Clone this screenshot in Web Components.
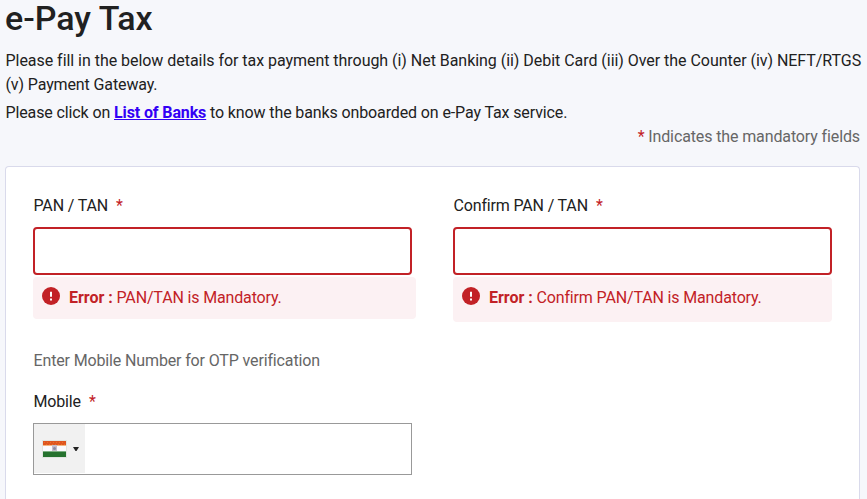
<!DOCTYPE html>
<html lang="en">
<head>
<meta charset="utf-8">
<title>e-Pay Tax</title>
<style>
body {
	margin: 0;
	height: 499px;
	overflow: hidden;
	background: #f6f7fb;
	color: #212121;
	font-family: Roboto, "Liberation Sans", sans-serif;
	font-size: 16px;
	line-height: 24px;
	letter-spacing: -0.12px;
}
</style>
</head>
<body>
<epay-page></epay-page>

<script>
// red star next to a mandatory label
class MandatoryMark extends HTMLElement {
	constructor() {
		super();
		this.attachShadow({ mode: "open" }).innerHTML = //html
		`
		<style>
			:host { color: #c22126; }
		</style>*`;
	}
}
customElements.define("mandatory-mark", MandatoryMark);

const ErrorTemplate = document.createElement("template");
ErrorTemplate.innerHTML = //html
`
	<style>
		:host {
			display: flex;
			box-sizing: border-box;
			gap: 9px;
			margin-top: 2px;
			padding: 9px 9px 0;
			border-radius: 4px;
			background: #fcf1f3;
			color: #c22126;
			line-height: 24px;
			letter-spacing: -0.15px;
		}
		svg { flex: none; display: block; margin-top: 1px; }
		b { font-weight: 700; letter-spacing: -0.03px; }
	</style>
	<svg width="18" height="18" viewBox="0 0 18 18">
		<circle cx="9" cy="9" r="9" fill="#c22126"/>
		<path d="M8 4.8h2v5H8zM8 11.4h2v2H8z" fill="#fff"/>
	</svg>
	<div><b>Error :</b> <slot></slot></div>
`;
class FieldError extends HTMLElement {
	constructor() {
		super();
		this.attachShadow({ mode: "open" });
		this.shadowRoot.appendChild(ErrorTemplate.content.cloneNode(true));
	}
}
customElements.define("field-error", FieldError);

const FieldTemplate = document.createElement("template");
FieldTemplate.innerHTML = //html
`
	<style>
		:host { display: block; }
		label {
			display: flex;
			gap: 8px;
			height: 24px;
			margin-bottom: 9px;
			padding-left: 0.5px;
			letter-spacing: -0.16px;
		}
		input {
			display: block;
			box-sizing: border-box;
			width: 100%;
			height: 48px;
			padding: 0 12px;
			border: 2px solid #c22126;
			border-radius: 4px;
			background: #fff;
			font: inherit;
			outline: none;
		}
	</style>
	<label for="field"><slot name="label"></slot><mandatory-mark></mandatory-mark></label>
	<slot name="control"><input id="field" type="text"></slot>
	<slot></slot>
`;
class FormField extends HTMLElement {
	constructor() {
		super();
		this.attachShadow({ mode: "open" });
		this.shadowRoot.appendChild(FieldTemplate.content.cloneNode(true));
	}
}
customElements.define("form-field", FormField);

const PhoneTemplate = document.createElement("template");
PhoneTemplate.innerHTML = //html
`
	<style>
		:host {
			display: flex;
			box-sizing: border-box;
			height: 52px;
			border: 1px solid #999;
			background: #fff;
		}
		.country {
			display: flex;
			align-items: center;
			box-sizing: border-box;
			width: 51px;
			height: 49px;
			padding-left: 8px;
			gap: 6px;
			background: #f1f1f1;
		}
		svg { display: block; }
		.arrow { margin-top: 1px; }
		input {
			flex: 1;
			min-width: 0;
			border: 0;
			padding: 0 12px;
			background: none;
			font: inherit;
			outline: none;
		}
	</style>
	<div class="country">
		<svg width="25" height="18" viewBox="0 0 25 18">
			<rect width="25" height="18" fill="#e1e5e1"/>
			<rect x="1" y="1" width="23" height="5" fill="#df5520"/>
			<path d="M2 2.5h21M4 4.5h19" stroke="#e87525" stroke-dasharray="1 2"/>
			<rect x="1" y="5" width="23" height="1" fill="#f5b683"/>
			<rect x="1" y="6" width="23" height="5" fill="#fbfbff"/>
			<rect x="10" y="5" width="5" height="6" fill="#c4bdcb"/>
			<circle cx="12.5" cy="8.5" r="1.5" fill="#8b8ba3"/>
			<rect x="1" y="11" width="23" height="1" fill="#7daf83"/>
			<rect x="1" y="12" width="23" height="5" fill="#26722f"/>
		</svg>
		<svg class="arrow" width="6" height="4" viewBox="0 0 6 4"><path d="M0 0h6L3.5 4h-1z" fill="#222"/></svg>
	</div>
	<input type="tel" aria-label="Mobile">
`;
class PhoneInput extends HTMLElement {
	constructor() {
		super();
		this.attachShadow({ mode: "open" });
		this.shadowRoot.appendChild(PhoneTemplate.content.cloneNode(true));
	}
}
customElements.define("phone-input", PhoneInput);

const CardTemplate = document.createElement("template");
CardTemplate.innerHTML = //html
`
	<style>
		:host {
			display: block;
			box-sizing: border-box;
			width: 855px;
			height: 333px;
			padding: 27px 27px 0;
			border: 1px solid #d9daeb;
			border-bottom: 0;
			border-radius: 4px 4px 0 0;
			background: #fff;
		}
	</style>
	<slot></slot>
`;
class FormCard extends HTMLElement {
	constructor() {
		super();
		this.attachShadow({ mode: "open" });
		this.shadowRoot.appendChild(CardTemplate.content.cloneNode(true));
	}
}
customElements.define("form-card", FormCard);

const PageTemplate = document.createElement("template");
PageTemplate.innerHTML = //html
`
	<style>
		:host { display: block; padding: 0 5px; }
		h1 {
			margin: 0 0 12px;
			height: 37px;
			font-size: 34px;
			font-weight: 500;
			line-height: 37px;
			letter-spacing: 0;
		}
		p { margin: 0 0 4px; }
		.intro { width: 861px; padding-left: 0.5px; }
		.modes { letter-spacing: -0.04px; }
		.banks { margin-bottom: 0; padding-left: 0.5px; }
		a { color: #3300f5; font-weight: 700; text-decoration: underline; }
		.note { width: 855px; margin-bottom: 17px; color: #666; text-align: right; }
		.row {
			display: grid;
			grid-template-columns: 379px 379px;
			column-gap: 41px;
		}
		.pan { width: 383px; height: 42px; }
		.confirm { height: 45px; }
		.hint { margin: 27px 0 17px; padding-left: 0.5px; color: #666; letter-spacing: -0.14px; }
	</style>

	<h1>e-Pay Tax</h1>
	<p class="intro"><span class="modes">Please fill in the below details for tax payment through (i) Net Banking (ii) Debit Card (iii) Over the Counter (iv) NEFT/RTGS</span> (v) Payment Gateway.</p>
	<p class="banks">Please click on <a href="#">List of Banks</a> to know the banks onboarded on e-Pay Tax service.</p>
	<p class="note"><mandatory-mark></mandatory-mark> Indicates the mandatory fields</p>

	<form-card>
		<div class="row">
			<form-field>
				<span slot="label">PAN / TAN</span>
				<field-error class="pan">PAN/TAN is Mandatory.</field-error>
			</form-field>
			<form-field>
				<span slot="label">Confirm PAN / TAN</span>
				<field-error class="confirm">Confirm PAN/TAN is Mandatory.</field-error>
			</form-field>
		</div>
		<p class="hint">Enter Mobile Number for OTP verification</p>
		<div class="row">
			<form-field>
				<span slot="label">Mobile</span>
				<phone-input slot="control"></phone-input>
			</form-field>
		</div>
	</form-card>
`;
class EpayPage extends HTMLElement {
	constructor() {
		super();
		this.attachShadow({ mode: "open" });
		this.shadowRoot.appendChild(PageTemplate.content.cloneNode(true));
	}
}
customElements.define("epay-page", EpayPage);
</script>
</body>
</html>
